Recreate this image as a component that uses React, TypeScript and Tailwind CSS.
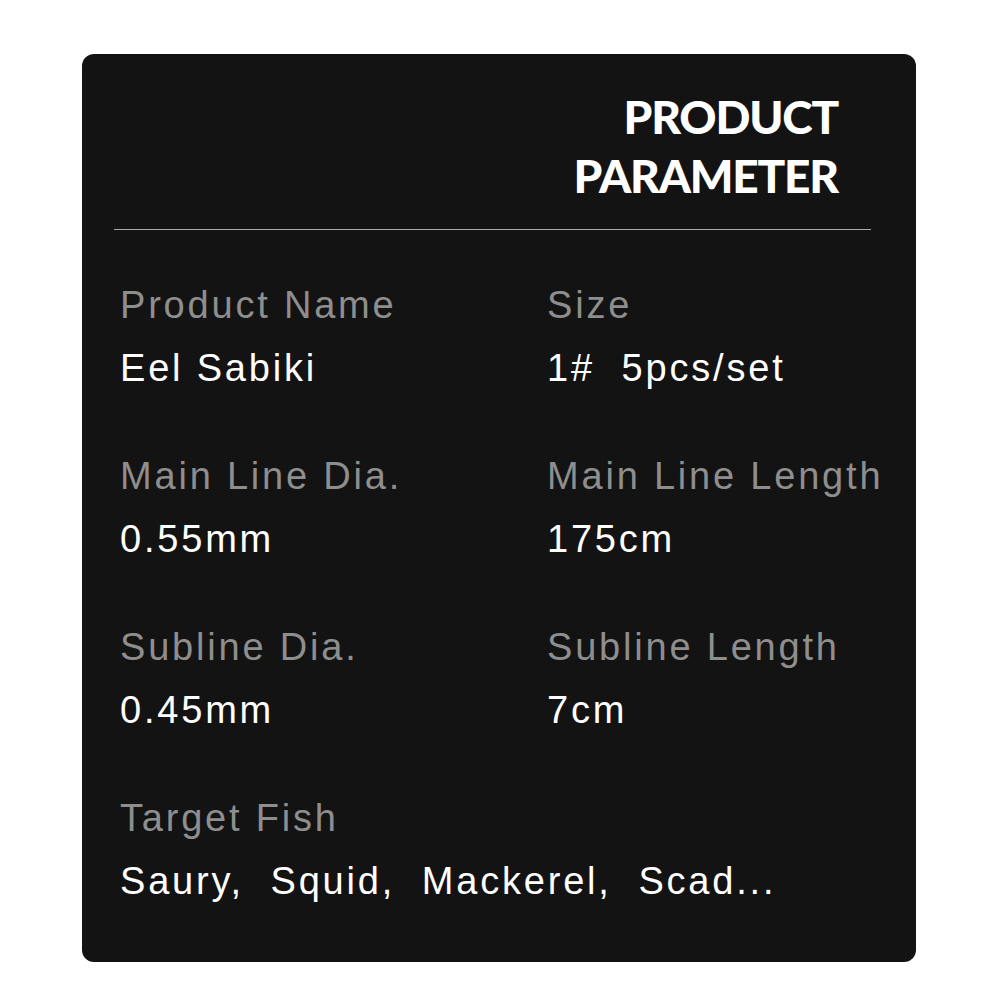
import React from "react";

const rows: [string, string, string, string][] = [
  ["Product Name", "Eel Sabiki", "Size", "1#\u00a0\u00a05pcs/set"],
  ["Main Line Dia.", "0.55mm", "Main Line Length", "175cm"],
  ["Subline Dia.", "0.45mm", "Subline Length", "7cm"],
];

const label = "text-[38px] leading-[38px] tracking-[2.8px] text-[#8e8e8e]";
const value = "text-[38px] leading-[38px] tracking-[2.8px] text-white";

export default function App() {
  return (
    <div className="w-[1000px] h-[1000px] bg-white pt-[54px] pl-[82px]">
      <div className="w-[834px] h-[908px] rounded-[12px] bg-[#131313] pt-[33px] flex flex-col">
        <div
          className="self-end pr-[78px] text-right text-white text-[46px] leading-[59px] font-black tracking-[-1.2px]"
          style={{ fontFamily: "Lato, sans-serif" }}
        >
          <div>PRODUCT</div>
          <div>PARAMETER</div>
        </div>
        <div className="mt-[24px] ml-[32px] mr-[45px] h-px bg-[#a8a8a8]" />
        <div
          className="mt-[56px] pl-[38px] flex flex-col"
          style={{ fontFamily: "'Liberation Sans', Arial, sans-serif" }}
        >
          {rows.map((r) => (
            <div key={r[0]} className="grid grid-cols-[427px_1fr] h-[171px]">
              <div className="flex flex-col gap-[25px]">
                <div className={label}>{r[0]}</div>
                <div className={value}>{r[1]}</div>
              </div>
              <div className="flex flex-col gap-[25px]">
                <div className={label}>{r[2]}</div>
                <div className={value}>{r[3]}</div>
              </div>
            </div>
          ))}
          <div className="flex flex-col gap-[25px]">
            <div className={label}>Target Fish</div>
            <div className={value + " whitespace-pre"}>
              {"Saury,  Squid,  Mackerel,  Scad..."}
            </div>
          </div>
        </div>
      </div>
    </div>
  );
}
